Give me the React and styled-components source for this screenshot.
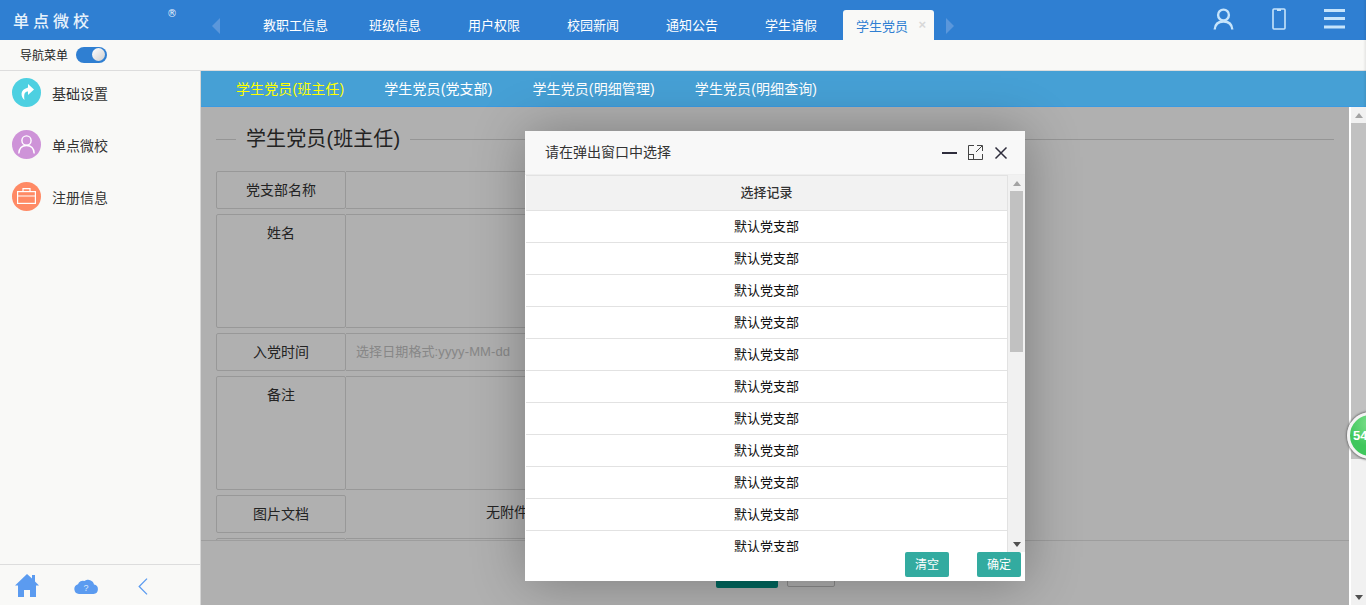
import styled, { createGlobalStyle } from "styled-components"

const topTabs = ["教职工信息", "班级信息", "用户权限", "校园新闻", "通知公告", "学生请假"]
const subTabs = ["学生党员(班主任)", "学生党员(党支部)", "学生党员(明细管理)", "学生党员(明细查询)"]
const rows = Array.from({ length: 11 }, () => "默认党支部")

const GlobalStyle = createGlobalStyle`
    html, body {
        margin: 0;
        padding: 0;
        height: 100%;
        overflow: hidden;
    }
    body {
        font-family: "Liberation Sans", "Noto Sans CJK SC", sans-serif;
        font-size: 13px;
        color: #333;
    }
    * {
        box-sizing: border-box;
    }
`

const Page = styled.div`
    position: relative;
    display: flex;
    flex-direction: column;
    width: 1366px;
    height: 605px;
    overflow: hidden;
    background: #f9f9f7;
`

const EdgeShade = styled.div`
    position: absolute;
    right: 0;
    top: 0;
    width: 3px;
    height: 107px;
    background: linear-gradient(to right, rgba(0, 0, 0, 0), rgba(0, 0, 0, 0.08));
`

const Header = styled.div`
    display: flex;
    align-items: flex-end;
    height: 40px;
    flex-shrink: 0;
    background: #2f7fd2;
    color: #fff;
`

const LogoBlock = styled.div`
    position: relative;
    width: 212px;
    height: 40px;
    padding: 10px 0 0 13px;
    font-size: 16px;
    line-height: 24px;
    letter-spacing: 4px;
    font-weight: 500;
    color: #e8f2fb;
`

const Reg = styled.span`
    position: absolute;
    left: 167px;
    top: 7px;
    font-family: "DejaVu Sans", sans-serif;
    font-size: 10px;
    line-height: 14px;
    letter-spacing: 0;
`

const Arrow = styled.svg`
    display: block;
    width: 8px;
    height: 16px;
    margin-bottom: 6px;
    flex-shrink: 0;
`

const TabList = styled.div`
    display: flex;
    align-items: flex-end;
    height: 40px;
    margin-left: 43px;
    margin-right: 12px;
`

const TopTab = styled.div`
    height: 30px;
    line-height: 31px;
    font-size: 13px;
    white-space: nowrap;
    margin-right: 47px;
    &:first-child {
        margin-right: 41px;
    }
    &:nth-last-child(2) {
        margin-right: 26px;
    }
`

const ActiveTab = styled.div`
    display: flex;
    align-items: center;
    justify-content: space-between;
    width: 91px;
    height: 30px;
    padding: 0 8px 0 13px;
    background: #f9f9f7;
    border-radius: 3px 3px 0 0;
    color: #2f7fd2;
    font-size: 13px;
`

const TabClose = styled.span`
    font-size: 13px;
    font-weight: 700;
    color: #d8d8d8;
    line-height: 28px;
`

const HeaderIcons = styled.div`
    display: flex;
    align-items: center;
    gap: 38px;
    height: 40px;
    margin-left: auto;
    padding: 0 21px 2px 0;
    color: #c6e4fb;
`

const NavBar = styled.div`
    display: flex;
    align-items: center;
    gap: 8px;
    height: 31px;
    flex-shrink: 0;
    padding: 0 0 1px 20px;
    border-bottom: 1px solid #ddd;
    font-size: 12px;
    color: #222;
`

const Toggle = styled.div`
    display: flex;
    justify-content: flex-end;
    align-items: center;
    width: 31px;
    height: 16px;
    padding-right: 2px;
    border-radius: 8px;
    background: #2f7fd2;
`

const Knob = styled.div`
    width: 13px;
    height: 13px;
    border-radius: 50%;
    background: linear-gradient(135deg, #fff, #cfcfcf);
`

const Body = styled.div`
    display: flex;
    flex: 1;
    min-height: 0;
`

const Sidebar = styled.div`
    display: flex;
    flex-direction: column;
    width: 201px;
    flex-shrink: 0;
    border-right: 1px solid #d6d6d6;
`

const NavList = styled.div`
    flex: 1;
`

const NavItem = styled.div`
    display: flex;
    align-items: center;
    gap: 11px;
    height: 52px;
    padding: 0 0 9px 12px;
    font-size: 14px;
    color: #333;
`

const NavCircle = styled.div`
    display: flex;
    align-items: center;
    justify-content: center;
    width: 29px;
    height: 29px;
    margin-top: -1px;
    border-radius: 50%;
    background: ${(p) => p.$color};
`

const SideFooter = styled.div`
    display: flex;
    align-items: center;
    height: 41px;
    flex-shrink: 0;
    padding: 0 0 0 15px;
    border-top: 1px solid #ddd;
    color: #5b9bf0;
`

const FootHome = styled.svg`
    width: 24px;
    height: 23px;
`

const FootCloud = styled.svg`
    width: 24px;
    height: 16px;
    margin: 2px 0 0 35px;
`

const FootBack = styled.svg`
    width: 10px;
    height: 17px;
    margin: 2px 0 0 40px;
`

const Main = styled.div`
    display: flex;
    flex-direction: column;
    flex: 1;
    min-width: 0;
`

const SubTabs = styled.div`
    display: flex;
    align-items: center;
    gap: 40px;
    height: 36px;
    flex-shrink: 0;
    padding: 0 0 1px 35px;
    background: #46a0d5;
    border-bottom: 1px solid #3b9ae0;
`

const SubTab = styled.div`
    font-size: 14px;
    letter-spacing: 0.1px;
    white-space: nowrap;
    color: ${(p) => (p.$active ? "#ffff00" : "#fff")};
`

const ContentRow = styled.div`
    display: flex;
    flex: 1;
    min-height: 0;
    background: #fff;
`

const Pane = styled.div`
    position: relative;
    display: flex;
    flex-direction: column;
    width: 1148px;
    flex-shrink: 0;
    background: #fff;
`

const Overlay = styled.div`
    position: absolute;
    inset: 0;
    background: rgba(0, 0, 0, 0.31);
`

const FormArea = styled.div`
    height: 433px;
    flex-shrink: 0;
    overflow: hidden;
    padding: 17px 15px 0;
`

const Legend = styled.div`
    display: flex;
    align-items: center;
    gap: 10px;
    height: 30px;
    margin-bottom: 17px;
    font-size: 20px;
    letter-spacing: 0.1px;
    line-height: 28px;
    color: #333;
    white-space: nowrap;
    &::before {
        content: "";
        width: 20px;
        height: 1px;
        background: #d8d8d8;
    }
    &::after {
        content: "";
        flex: 1;
        height: 1px;
        background: #d8d8d8;
    }
`

const FormRow = styled.div`
    display: flex;
    width: 700px;
    height: ${(p) => p.$h}px;
    margin-bottom: 5px;
`

const Label = styled.div`
    width: 130px;
    flex-shrink: 0;
    height: 100%;
    text-align: center;
    font-size: 14px;
    line-height: 20px;
    color: #333;
    border: 1px solid #ddd;
    border-radius: 2px;
    padding-top: 8px;
`

const Value = styled.div`
    flex: 1;
    height: 100%;
    padding: 0 10px;
    font-size: 13px;
    letter-spacing: 0.1px;
    line-height: 36px;
    color: #c4c4c4;
    border: 1px solid #ddd;
    border-left: 0;
    border-radius: 0 2px 2px 0;
    background: #fff;
`

const PlainValue = styled.div`
    flex: 1;
    padding: 7px 0 0 140px;
    font-size: 14px;
    line-height: 20px;
    color: #333;
`

const FormFooter = styled.div`
    display: flex;
    flex: 1;
    justify-content: center;
    gap: 9px;
    padding: 13px 0 0 1px;
    border-top: 1px solid #e4e4e4;
`

const SaveBtn = styled.div`
    width: 62px;
    height: 34px;
    border-radius: 2px;
    background: #009688;
`

const ResetBtn = styled.div`
    width: 48px;
    height: 33px;
    border-radius: 2px;
    background: #fff;
    border: 1px solid #c9c9c9;
`

const Scrollbar = styled.div`
    display: flex;
    flex-direction: column;
    width: ${(p) => p.$w}px;
    flex-shrink: 0;
    background: #f1f1f1;
`

const ScrollBtn = styled.div`
    display: flex;
    align-items: center;
    justify-content: center;
    height: 16px;
    flex-shrink: 0;
    color: ${(p) => (p.$dark ? "#505050" : "#a3a3a3")};
    margin-top: ${(p) => (p.$end ? "auto" : "0")};
`

const ScrollThumb = styled.div`
    height: ${(p) => p.$h}px;
    margin: 0 ${(p) => p.$inset || 0}px;
    background: #c1c1c1;
`

const PageScroll = styled.div`
    display: flex;
    width: 17px;
    flex-shrink: 0;
    padding-left: 2px;
    background: #fff;
`

const Dialog = styled.div`
    position: absolute;
    left: 525px;
    top: 131px;
    display: flex;
    flex-direction: column;
    width: 500px;
    height: 450px;
    background: #fff;
    box-shadow: 1px 1px 50px rgba(0, 0, 0, 0.3);
`

const DialogHead = styled.div`
    display: flex;
    align-items: center;
    height: 44px;
    flex-shrink: 0;
    padding: 0 17px 3px 20px;
    background: #f8f8f8;
    border-bottom: 1px solid #eee;
    font-size: 14px;
    color: #333;
`

const DialogTools = styled.div`
    display: flex;
    align-items: center;
    gap: 11px;
    margin: 3px 0 0 auto;
    color: #2e2d3c;
`

const DialogBody = styled.div`
    display: flex;
    height: 377px;
    flex-shrink: 0;
    overflow: hidden;
`

const Table = styled.div`
    flex: 1;
    min-width: 0;
    height: 377px;
    overflow: hidden;
    margin: 0 0 0 1px;
    border-top: 1px solid #e2e2e2;
    border-right: 1px solid #e2e2e2;
`

const TableHead = styled.div`
    height: 35px;
    line-height: 33px;
    text-align: center;
    font-size: 13px;
    font-weight: 500;
    color: #333;
    background: #f2f2f2;
    border-bottom: 1px solid #e2e2e2;
`

const TableRow = styled.div`
    height: 32px;
    line-height: 31px;
    text-align: center;
    font-size: 13px;
    color: #111;
    border-bottom: 1px solid #e2e2e2;
`

const DialogFoot = styled.div`
    display: flex;
    justify-content: flex-end;
    gap: 28px;
    padding-right: 4px;
`

const DialogBtn = styled.div`
    width: 44px;
    height: 25px;
    line-height: 27px;
    text-align: center;
    font-size: 12px;
    color: #fff;
    background: #33aba0;
    border-radius: 2px;
`

const Badge = styled.div`
    position: absolute;
    left: 1347px;
    top: 412px;
    width: 47px;
    height: 47px;
    padding-left: 3px;
    line-height: 42px;
    border-radius: 50%;
    border: 3px solid #f4f4f4;
    box-shadow: 0 0 2px 1px #777;
    background: radial-gradient(circle at 50% 20%, #7fe08c, #3fc75c 60%);
    color: #fff;
    font-size: 13px;
    font-weight: 700;
`

const Tri = ({ up }) => (
    <svg width="8" height="5" viewBox="0 0 8 5">
        <path d={up ? "M4 0 8 5H0z" : "M0 0h8L4 5z"} fill="currentColor" />
    </svg>
)

function App() {
    return (
        <Page>
            <GlobalStyle />
            <Header>
                <LogoBlock>
                    单点微校
                    <Reg>®</Reg>
                </LogoBlock>
                <Arrow viewBox="0 0 8 16">
                    <path d="M8 0v16L0 8z" fill="#5b97db" />
                </Arrow>
                <TabList>
                    {topTabs.map((t) => (
                        <TopTab key={t}>{t}</TopTab>
                    ))}
                    <ActiveTab>
                        学生党员
                        <TabClose>×</TabClose>
                    </ActiveTab>
                </TabList>
                <Arrow viewBox="0 0 8 16">
                    <path d="M0 0v16l8-8z" fill="#5b97db" />
                </Arrow>
                <HeaderIcons>
                    <svg width="21" height="22" viewBox="0 0 21 22" fill="none" stroke="currentColor" strokeWidth="2.4">
                        <circle cx="10.500" cy="7" r="5.400" />
                        <path d="M1.700 21.500c.4-5 3.600-8 8.800-8s8.400 3 8.800 8" />
                    </svg>
                    <svg width="14" height="22" viewBox="0 0 14 22" fill="none" stroke="currentColor" strokeWidth="1.600">
                        <rect x="1" y="1" width="12" height="20" rx="1" />
                        <path d="M5 2h4" strokeWidth="2" />
                    </svg>
                    <svg width="21" height="20" viewBox="0 0 21 20" fill="currentColor">
                        <rect width="21" height="3" />
                        <rect y="8" width="21" height="3" />
                        <rect y="16.500" width="21" height="3" />
                    </svg>
                </HeaderIcons>
            </Header>
            <NavBar>
                导航菜单
                <Toggle>
                    <Knob />
                </Toggle>
            </NavBar>
            <Body>
                <Sidebar>
                    <NavList>
                        <NavItem>
                            <NavCircle $color="#4dd0e1">
                                <svg width="15" height="16" viewBox="0 0 15 16">
                                    <path d="M9 0l6 5.500L9 11V7.500C6 7.500 4.500 9.500 5.500 16 2 13 0 6 9 3.500z" fill="#fff" />
                                </svg>
                            </NavCircle>
                            基础设置
                        </NavItem>
                        <NavItem>
                            <NavCircle $color="#ce93d8">
                                <svg width="17" height="19" viewBox="0 0 17 19" fill="none" stroke="#fff" strokeWidth="1.400">
                                    <circle cx="8.500" cy="5.500" r="4.600" />
                                    <path d="M.8 18.500c.3-5 3-8 7.700-8s7.400 3 7.700 8" />
                                </svg>
                            </NavCircle>
                            单点微校
                        </NavItem>
                        <NavItem>
                            <NavCircle $color="#ff8a65">
                                <svg width="19" height="16" viewBox="0 0 19 16" fill="none" stroke="#fff" strokeWidth="1.200">
                                    <rect x=".6" y="3.600" width="17.800" height="11.800" />
                                    <path d="M6 3.500V.7h7v2.800M.6 8h17.800" />
                                </svg>
                            </NavCircle>
                            注册信息
                        </NavItem>
                    </NavList>
                    <SideFooter>
                        <FootHome viewBox="0 0 24 23">
                            <path d="M12 0l5 4.500V1h3v6.500L24 11.500h-3V23h-6v-7H9v7H3V11.500H0z" fill="currentColor" />
                        </FootHome>
                        <FootCloud viewBox="0 0 24 16">
                            <path d="M5 16a5 5 0 0 1-1-9.800A5 5 0 0 1 10.500 3 6 6 0 0 1 20 6.500 4.800 4.800 0 0 1 19.500 16z" fill="currentColor" />
                            <text x="12" y="13" fontSize="9" textAnchor="middle" fill="#dbe9fb">?</text>
                        </FootCloud>
                        <FootBack viewBox="0 0 10 17" fill="none" stroke="currentColor" strokeWidth="1.300">
                            <path d="M9 .6 1.200 8.500 9 16.400" />
                        </FootBack>
                    </SideFooter>
                </Sidebar>
                <Main>
                    <SubTabs>
                        {subTabs.map((t, i) => (
                            <SubTab key={t} $active={i === 0}>{t}</SubTab>
                        ))}
                    </SubTabs>
                    <ContentRow>
                        <Pane>
                            <FormArea>
                                <Legend>学生党员(班主任)</Legend>
                                <FormRow $h={38}>
                                    <Label>党支部名称</Label>
                                    <Value />
                                </FormRow>
                                <FormRow $h={114}>
                                    <Label>姓名</Label>
                                    <Value />
                                </FormRow>
                                <FormRow $h={38}>
                                    <Label>入党时间</Label>
                                    <Value>选择日期格式:yyyy-MM-dd</Value>
                                </FormRow>
                                <FormRow $h={114}>
                                    <Label>备注</Label>
                                    <Value />
                                </FormRow>
                                <FormRow $h={38}>
                                    <Label>图片文档</Label>
                                    <PlainValue>无附件</PlainValue>
                                </FormRow>
                                <FormRow $h={38}>
                                    <Label />
                                    <Value />
                                </FormRow>
                            </FormArea>
                            <FormFooter>
                                <SaveBtn />
                                <ResetBtn />
                            </FormFooter>
                            <Overlay />
                        </Pane>
                        <PageScroll>
                            <Scrollbar $w={15}>
                                <ScrollBtn><Tri up /></ScrollBtn>
                                <ScrollThumb $h={336} />
                                <ScrollBtn $end $dark><Tri /></ScrollBtn>
                            </Scrollbar>
                        </PageScroll>
                    </ContentRow>
                </Main>
            </Body>
            <Dialog>
                <DialogHead>
                    请在弹出窗口中选择
                    <DialogTools>
                        <svg width="15" height="15" viewBox="0 0 15 15">
                            <rect y="7" width="15" height="2" fill="currentColor" />
                        </svg>
                        <svg width="15" height="15" viewBox="0 0 15 15" fill="none" stroke="#444" strokeWidth="1">
                            <path d="M6 .5H.5v14h14V9M14.500 6V.5H9M14 1 8 7" />
                            <rect x=".5" y="9.500" width="5" height="5" />
                        </svg>
                        <svg width="14" height="14" viewBox="0 0 14 14" fill="none" stroke="currentColor" strokeWidth="1.500">
                            <path d="M1.500 1.500l11 11M12.500 1.500l-11 11" />
                        </svg>
                    </DialogTools>
                </DialogHead>
                <DialogBody>
                    <Table>
                        <TableHead>选择记录</TableHead>
                        {rows.map((r, i) => (
                            <TableRow key={i}>{r}</TableRow>
                        ))}
                    </Table>
                    <Scrollbar $w={17}>
                        <ScrollBtn><Tri up /></ScrollBtn>
                        <ScrollThumb $h={161} $inset={2} />
                        <ScrollBtn $end $dark><Tri /></ScrollBtn>
                    </Scrollbar>
                </DialogBody>
                <DialogFoot>
                    <DialogBtn>清空</DialogBtn>
                    <DialogBtn>确定</DialogBtn>
                </DialogFoot>
            </Dialog>
            <Badge>54</Badge>
            <EdgeShade />
        </Page>
    )
}

export default App
